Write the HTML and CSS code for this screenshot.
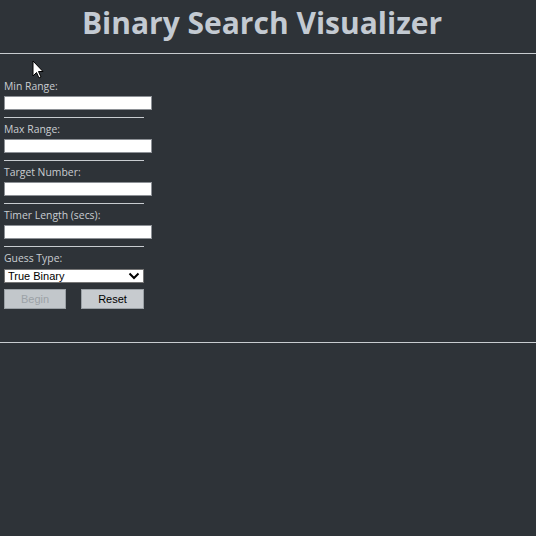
FILE: index.html
```html
<!DOCTYPE html>
<html>
<head>
<meta charset="utf-8">
<link rel="stylesheet" href="styles.css">
</head>
<body>
<header class="header">
  <h1 class="title">Binary Search Visualizer</h1>
</header>
<div class="rule full"></div>
<form class="form">
  <div class="field">
    <label class="label">Min Range:</label>
    <input class="input" type="text">
    <div class="rule short"></div>
  </div>
  <div class="field">
    <label class="label">Max Range:</label>
    <input class="input" type="text">
    <div class="rule short"></div>
  </div>
  <div class="field">
    <label class="label">Target Number:</label>
    <input class="input" type="text">
    <div class="rule short"></div>
  </div>
  <div class="field">
    <label class="label">Timer Length (secs):</label>
    <input class="input" type="text">
    <div class="rule short"></div>
  </div>
  <div class="field last">
    <label class="label">Guess Type:</label>
    <div class="select">
      <span>True Binary</span>
      <svg width="12" height="8" viewBox="0 0 12 8"><path d="M1.5 1.5 L6 6 L10.5 1.5" fill="none" stroke="#000" stroke-width="2"/></svg>
    </div>
  </div>
  <div class="buttons">
    <button type="button" class="btn disabled">Begin</button>
    <button type="button" class="btn">Reset</button>
  </div>
</form>
<div class="rule full bottom"></div>
<svg class="cursor" width="14" height="20" viewBox="0 0 14 20"><path d="M1 1 L1 16 L4.5 12.5 L7 18 L9 17 L6.5 11.5 L11 11.5 Z" fill="#fff" stroke="#000" stroke-width="1"/></svg>
</body>
</html>
```
FILE: styles.css
```css
html, body {
  margin: 0;
  padding: 0;
  background: #2e3338;
  height: 100%;
}
body {
  font-family: "Open Sans", "DejaVu Sans", sans-serif;
  position: relative;
}
.header {
  height: 53px;
  display: flex;
  justify-content: center;
  align-items: center;
}
.title {
  margin: 0;
  font-family: "Open Sans", sans-serif;
  font-weight: 700;
  font-size: 30px;
  color: #c3cad2;
  transform: translate(-6px, -4px);
}
.rule {
  height: 1px;
  background: #c8ccd0;
}
.rule.full { width: 100%; }
.rule.short { width: 140px; margin-top: 7px; }
.form {
  padding: 26px 0 0 4px;
  display: flex;
  flex-direction: column;
}
.field {
  display: flex;
  flex-direction: column;
  height: 43px;
}
.field.last { height: auto; }
.label {
  font-size: 10.4px;
  line-height: 12px;
  color: #c9cdd1;
}
.input {
  box-sizing: border-box;
  width: 148px;
  height: 14px;
  margin: 0;
  margin-top: 4px;
  border: 1px solid #8d9196;
  background: #fff;
  padding: 0;
}
.select {
  box-sizing: border-box;
  width: 140px;
  height: 14px;
  margin-top: 5px;
  background: #fff;
  border: 1px solid #767676;
  display: flex;
  align-items: center;
  justify-content: space-between;
  padding: 0 3px 0 3px;
  font-family: "Liberation Sans", Arial, sans-serif;
  font-size: 11px;
  color: #000;
}
.buttons {
  display: flex;
  gap: 15px;
  margin-top: 6px;
}
.btn {
  box-sizing: border-box;
  width: 63px;
  height: 20px;
  margin: 0;
  background: #c7cbcf;
  border: 1px solid #9aa0a5;
  font-family: "Liberation Sans", Arial, sans-serif;
  font-size: 11px;
  color: #000;
  padding: 0;
}
.btn.disabled {
  width: 62px;
  color: #9ca2a7;
  background: #c2c7cb;
}
.rule.bottom { margin-top: 33px; }
.cursor {
  position: absolute;
  left: 32px;
  top: 60px;
}
```
